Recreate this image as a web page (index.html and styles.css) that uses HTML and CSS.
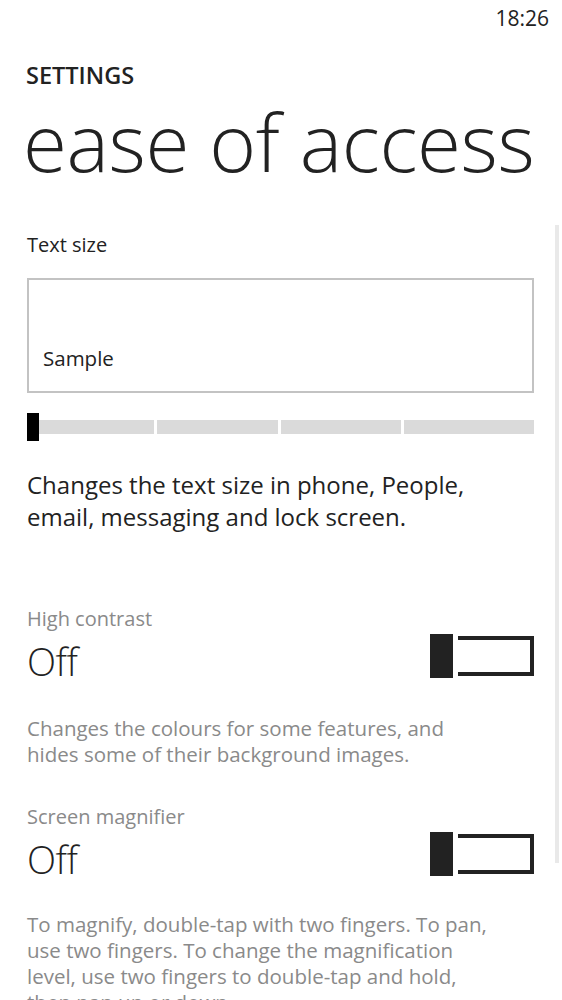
FILE: index.html
```html
<!DOCTYPE html>
<html lang="en">
<head>
<meta charset="utf-8">
<title>ease of access</title>
<link rel="stylesheet" href="styles.css">
</head>
<body>
<div class="phone">
  <div class="status"><span class="time">18:26</span></div>
  <header class="head">
    <div class="app">SETTINGS</div>
    <h1 class="page">ease of access</h1>
  </header>
  <main class="content">
    <div class="scrollbar"></div>
    <section class="textsize">
      <div class="label">Text size</div>
      <div class="sample"><span>Sample</span></div>
      <div class="slider">
        <div class="thumb"></div>
        <div class="seg s1"></div>
        <div class="seg s2"></div>
        <div class="seg s3"></div>
        <div class="seg s4"></div>
      </div>
      <p class="desc dark">Changes the text size in phone, People, email, messaging and lock screen.</p>
    </section>
    <section class="setting first">
      <div class="label gray">High contrast</div>
      <div class="row">
        <span class="state">Off</span>
        <div class="toggle"><div class="knob"></div><div class="track"></div></div>
      </div>
      <p class="desc gray">Changes the colours for some features, and hides some of their background images.</p>
    </section>
    <section class="setting second">
      <div class="label gray">Screen magnifier</div>
      <div class="row">
        <span class="state">Off</span>
        <div class="toggle"><div class="knob"></div><div class="track"></div></div>
      </div>
      <p class="desc gray">To magnify, double-tap with two fingers. To pan, use two fingers. To change the magnification level, use two fingers to double-tap and hold, then pan up or down.</p>
    </section>
  </main>
</div>
</body>
</html>
```
FILE: styles.css
```css
html, body {
  margin: 0;
  padding: 0;
  background: #ffffff;
}
body {
  font-family: "Open Sans", "Noto Sans", sans-serif;
  color: #222222;
  overflow: hidden;
}
.phone {
  width: 562px;
  height: 1000px;
  overflow: hidden;
}
.status {
  display: flex;
  justify-content: flex-end;
  padding: 4px 13px 0 0;
  height: 32px;
}
.time {
  font-size: 21px;
  line-height: 28px;
  color: #222;
}
.head {
  padding-left: 26px;
}
.app {
  font-size: 23.5px;
  font-weight: 600;
  line-height: 30px;
  margin-top: 24px;
}
.page {
  margin: 1px 0 0 -3px;
  font-size: 80px;
  font-weight: 300;
  line-height: 100px;
  letter-spacing: -0.4px;
}
.content {
  position: relative;
  padding: 40px 28px 0 27px;
}
.scrollbar {
  position: absolute;
  right: 3px;
  top: 34px;
  width: 4px;
  height: 638px;
  background: #e9e9e9;
}
.label {
  font-size: 20px;
  line-height: 28px;
}
.gray {
  color: #8a8a8a;
}
.sample {
  margin-top: 19px;
  height: 115px;
  box-sizing: border-box;
  border: 2px solid #c3c3c3;
  display: flex;
  align-items: flex-end;
  padding: 0 0 19px 14px;
}
.sample span {
  font-size: 20.5px;
  line-height: 28px;
}
.slider {
  margin-top: 20px;
  height: 28px;
  display: flex;
  align-items: center;
  gap: 3px;
}
.thumb {
  width: 12px;
  height: 28px;
  background: #000;
  margin-right: -3px;
  flex: none;
}
.seg {
  height: 14px;
  background: #dadada;
}
.s1 { flex: 0 0 115px; }
.s2 { flex: 0 0 121px; }
.s3 { flex: 0 0 120px; }
.s4 { flex: 1; }
.desc {
  margin: 0;
  max-width: 470px;
}
.desc.dark {
  margin-top: 28px;
  font-size: 24px;
  line-height: 32px;
}
.setting.first {
  margin-top: 72px;
}
.setting.second {
  margin-top: 36px;
}
.row {
  display: flex;
  justify-content: space-between;
  align-items: flex-start;
  height: 44px;
  margin-top: 1px;
}
.state {
  font-size: 38px;
  font-weight: 300;
  line-height: 44px;
  margin-top: 5px;
  letter-spacing: -0.5px;
}
.toggle {
  display: flex;
  align-items: center;
  gap: 5px;
}
.knob {
  width: 23px;
  height: 44px;
  background: #222;
}
.track {
  width: 76px;
  height: 40px;
  box-sizing: border-box;
  border: 4px solid #222;
  border-left: none;
}
.desc.gray {
  margin-top: 37px;
  font-size: 20.5px;
  line-height: 26px;
}
.second .desc.gray {
  margin-top: 35px;
}
```
